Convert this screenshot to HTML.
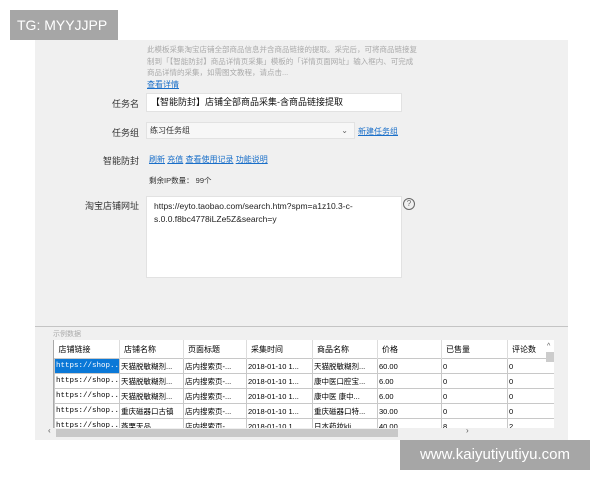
<!DOCTYPE html><html><head><meta charset="utf-8"><style>
body{margin:0;width:600px;height:480px;background:#fff;position:relative;overflow:hidden;font-family:"Liberation Sans","Noto Sans CJK SC",sans-serif;}
.a{position:absolute}
.panel{left:35px;top:40px;width:533px;height:400px;background:#f0f0f0}
.lbl{font-size:9px;color:#333;text-align:right;width:104px;left:35px}
.lnk{color:#1a6fc9;text-decoration:underline;font-size:8px}
.inp{background:#fff;border:1px solid #e2e2e2;box-sizing:border-box}
table{border-collapse:collapse;font-size:7.5px;table-layout:fixed}
td{border:1px solid #c8c8c8;height:14px;padding:0 1px;white-space:nowrap;overflow:hidden;background:#fff}
th{font-weight:normal;text-align:left;height:18px;padding:0 4px;font-size:8px;border-right:1px solid #ddd;background:#fff}
</style></head><body>
<div class="a panel"></div>
<div class="a" style="left:10px;top:10px;width:108px;height:30px;background:#a6a6a6;color:#fff;font-size:14px;line-height:30px;padding-left:7px;box-sizing:border-box">TG: MYYJJPP</div>
<div class="a" style="left:147px;top:44px;width:272px;font-size:7.5px;line-height:11.5px;color:#aaa">此模板采集淘宝店铺全部商品信息并含商品链接的提取。采完后，可将商品链接复制到「【智能防封】商品详情页采集」模板的「详情页面网址」输入框内、可完成商品详情的采集，如需图文教程，请点击...</div>
<div class="a lnk" style="left:147px;top:79px">查看详情</div>
<div class="a lbl" style="top:97px">任务名</div>
<div class="a inp" style="left:146px;top:93px;width:256px;height:19px;font-size:9px;line-height:17px;padding-left:4px;color:#111">【智能防封】店铺全部商品采集-含商品链接提取</div>
<div class="a lbl" style="top:126px">任务组</div>
<div class="a inp" style="left:146px;top:122px;width:209px;height:17px;font-size:8px;line-height:15px;padding-left:3px;color:#333;background:#f7f7f7">练习任务组<span style="position:absolute;right:6px;color:#666">⌄</span></div>
<div class="a lnk" style="left:358px;top:126px">新建任务组</div>
<div class="a lbl" style="top:154px">智能防封</div>
<div class="a" style="left:149px;top:154px;font-size:8px;line-height:11px"><span class="lnk">刷新</span> <span class="lnk">充值</span> <span class="lnk">查看使用记录</span> <span class="lnk">功能说明</span></div>
<div class="a" style="left:149px;top:175px;font-size:7.5px;color:#333">剩余IP数量： 99个</div>
<div class="a lbl" style="top:199px">淘宝店铺网址</div>
<div class="a inp" style="left:146px;top:196px;width:256px;height:82px;font-size:8.5px;line-height:13px;padding:3px 14px 0 7px;color:#222">https://eyto.taobao.com/search.htm?spm=a1z10.3-c-s.0.0.f8bc4778iLZe5Z&search=y</div>
<div class="a" style="left:403px;top:198px;width:10px;height:10px;border:1px solid #666;border-radius:50%;font-size:8px;line-height:10px;text-align:center;color:#666">?</div>
<div class="a" style="left:35px;top:326px;width:533px;height:1px;background:#c4c4c4"></div>
<div class="a" style="left:53px;top:329px;font-size:7px;color:#aaa">示例数据</div>
<div class="a" style="left:53px;top:340px;width:500px;height:88px;overflow:hidden;background:#fff;border-left:1px solid #aaa">
<table style="width:500px">
<colgroup><col width="65"><col width="64"><col width="63"><col width="66"><col width="65"><col width="64"><col width="66"><col width="47"></colgroup>
<tr><th>店铺链接</th><th>店铺名称</th><th>页面标题</th><th>采集时间</th><th>商品名称</th><th>价格</th><th>已售量</th><th>评论数</th></tr>
<tr><td style="background:#0a78d7;color:#fff;font-family:'Liberation Mono'">https://shop...</td><td>天猫脱敏糊剂...</td><td>店内搜索页-...</td><td>2018-01-10 1...</td><td>天猫脱敏糊剂...</td><td>60.00</td><td>0</td><td>0</td></tr>
<tr><td style="font-family:'Liberation Mono'">https://shop...</td><td>天猫脱敏糊剂...</td><td>店内搜索页-...</td><td>2018-01-10 1...</td><td>康中医口腔宝...</td><td>6.00</td><td>0</td><td>0</td></tr>
<tr><td style="font-family:'Liberation Mono'">https://shop...</td><td>天猫脱敏糊剂...</td><td>店内搜索页-...</td><td>2018-01-10 1...</td><td>康中医 康中...</td><td>6.00</td><td>0</td><td>0</td></tr>
<tr><td style="font-family:'Liberation Mono'">https://shop...</td><td>重庆磁器口古镇</td><td>店内搜索页-...</td><td>2018-01-10 1...</td><td>重庆磁器口特...</td><td>30.00</td><td>0</td><td>0</td></tr>
<tr><td style="font-family:'Liberation Mono'">https://shop...</td><td>燕栗天品</td><td>店内搜索页-...</td><td>2018-01-10 1...</td><td>日本药妆kli...</td><td>40.00</td><td>8</td><td>2</td></tr>
</table></div>
<div class="a" style="left:53px;top:428px;width:500px;height:10px;background:#f0f0f0"></div>
<div class="a" style="left:56px;top:429px;width:342px;height:8px;background:#c8c8c8"></div>
<div class="a" style="left:48px;top:426px;font-size:8px;color:#555">‹</div>
<div class="a" style="left:466px;top:426px;font-size:8px;color:#555">›</div>
<div class="a" style="left:547px;top:343px;width:7px;height:8px;font-size:7px;color:#555">^</div>
<div class="a" style="left:546px;top:352px;width:8px;height:10px;background:#ccc"></div>
<div class="a" style="left:400px;top:440px;width:190px;height:30px;background:#a6a6a6;color:#fff;font-size:15px;line-height:30px;text-align:center">www.kaiyutiyutiyu.com</div>
</body></html>
